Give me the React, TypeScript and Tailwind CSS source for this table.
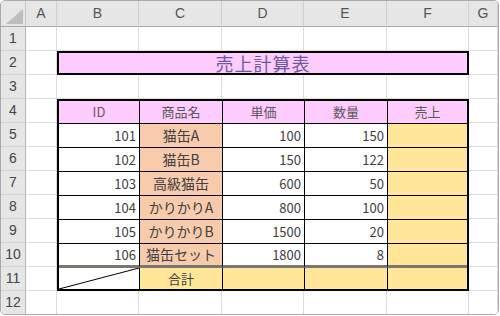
const cols = ["A", "B", "C", "D", "E", "F", "G"];

const items = [
  { id: 101, name: "猫缶A", price: 100, qty: 150 },
  { id: 102, name: "猫缶B", price: 150, qty: 122 },
  { id: 103, name: "高級猫缶", price: 600, qty: 50 },
  { id: 104, name: "かりかりA", price: 800, qty: 100 },
  { id: 105, name: "かりかりB", price: 1500, qty: 20 },
  { id: 106, name: "猫缶セット", price: 1800, qty: 8 },
];

const jp = "font-['Noto_Sans_CJK_JP','Noto_Sans',sans-serif]";
const gridCell = "border-r border-b border-[#dcdcdc] bg-white";
const rowHead =
  "bg-[#e6e6e6] border-r border-b border-r-[#b5b5b5] border-b-[#d2d2d2] flex items-center justify-center text-[14px] text-[#444] font-['Liberation_Sans',sans-serif]";

export default function App() {
  const sheetRows = Array.from({ length: 12 }, (_, i) => i + 1);

  return (
    <div className="w-[500px] h-[316px] bg-white">
      <div className="w-[499px] h-[315px] border border-[#a9a9a9] rounded-[5px] overflow-hidden grid grid-cols-[25px_31px_82px_83px_82px_83px_82px_1fr] grid-rows-[26px_repeat(12,24px)]">
        {/* Title B2:F2 */}
        <div
          className={`col-start-3 col-span-5 row-start-3 border-2 border-black bg-[#ffccff] flex items-center justify-center text-[18px] text-[#6a58a0] tracking-[1px] ${jp}`}
        >
          売上計算表
        </div>

        {/* Table B4:F11 */}
        <div
          className={`col-start-3 col-span-5 row-start-5 row-span-8 border-2 border-black grid grid-cols-[81px_83px_82px_83px_1fr] grid-rows-[23px_repeat(6,24px)_1fr] text-[13px] text-[#404040] ${jp}`}
        >
          {["ID", "商品名", "単価", "数量", "売上"].map((h, i) => (
            <div
              key={h}
              className={`bg-[#ffccff] border-b border-black flex items-center justify-center text-[#595959] ${
                i < 4 ? "border-r" : ""
              }`}
            >
              {h}
            </div>
          ))}

          {items.map((it, r) => {
            const last = r === items.length - 1;
            const bottom = last
              ? "border-b-[3px] border-b-[#7d7570]"
              : "border-b border-b-black";
            return [
              <div key={`b${r}`} className={`bg-white border-r border-black ${bottom} flex items-center justify-end pr-[3px]`}>
                {it.id}
              </div>,
              <div key={`c${r}`} className={`bg-[#f8cbad] border-r border-black ${bottom} flex items-center justify-center text-[14px]`}>
                {it.name}
              </div>,
              <div key={`d${r}`} className={`bg-white border-r border-black ${bottom} flex items-center justify-end pr-[3px]`}>
                {it.price}
              </div>,
              <div key={`e${r}`} className={`bg-white border-r border-black ${bottom} flex items-center justify-end pr-[3px]`}>
                {it.qty}
              </div>,
              <div key={`f${r}`} className={`bg-[#ffe699] ${bottom}`} />,
            ];
          })}

          {/* Row 11 */}
          <div className="relative bg-white border-r border-black">
            <svg className="absolute inset-0 w-full h-full" viewBox="0 0 100 100" preserveAspectRatio="none">
              <line x1="0" y1="100" x2="100" y2="0" stroke="#000" strokeWidth="1" vectorEffect="non-scaling-stroke" />
            </svg>
          </div>
          <div className="bg-[#ffe699] border-r border-black flex items-center justify-center">合計</div>
          <div className="bg-[#ffe699] border-r border-black" />
          <div className="bg-[#ffe699] border-r border-black" />
          <div className="bg-[#ffe699]" />
        </div>

        {/* Column headers */}
        <div className="bg-[#e6e6e6] border-r border-b border-r-[#c8c8c8] border-b-[#a8a8a8] flex items-end justify-end pr-[2px] pb-[2px]">
          <svg width="17" height="15" viewBox="0 0 17 15">
            <polygon points="17,0 17,15 0,15" fill="#bdbdbd" />
          </svg>
        </div>
        {cols.map((c) => (
          <div
            key={c}
            className="bg-[#e6e6e6] border-r border-b border-r-[#cfcfcf] border-b-[#a8a8a8] flex items-center justify-center text-[14px] text-[#555] font-['Liberation_Sans',sans-serif]"
          >
            {c}
          </div>
        ))}

        {/* Sheet rows */}
        {sheetRows.map((r) => {
          const covered = r === 2 || (r >= 4 && r <= 11);
          return [
            <div key={`h${r}`} className={rowHead}>
              {r}
            </div>,
            <div key={`a${r}`} className={gridCell} />,
            ...(covered
              ? []
              : ["B", "C", "D", "E", "F"].map((c) => <div key={`${c}${r}`} className={gridCell} />)),
            <div key={`g${r}`} className={gridCell} />,
          ];
        })}
      </div>
    </div>
  );
}
